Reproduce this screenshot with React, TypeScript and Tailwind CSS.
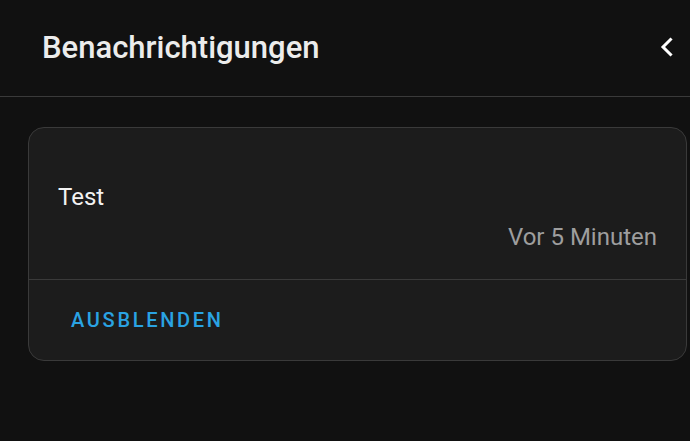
import React from 'react';

export default function App() {
  return (
    <div className="h-[441px] w-[690px] overflow-hidden bg-[#111111] font-['Roboto',sans-serif]">
      <header className="flex h-[97px] items-center justify-between border-b border-[#3a3a3a] pl-[42px] pr-[17px]">
        <h1 className="text-[31px] leading-[36px] font-medium text-[#ececec]">Benachrichtigungen</h1>
        <svg width="14" height="20" viewBox="0 0 14 20" fill="none" className="-mt-[2px]">
          <path d="M11.5 2.5 4 10l7.5 7.5" stroke="#ffffff" strokeWidth="3" strokeLinecap="square" />
        </svg>
      </header>
      <div className="pl-[28px] pr-[3px] pt-[30px]">
        <div className="rounded-[16px] border border-[#3a3a3a] bg-[#1c1c1c]">
          <div className="h-[151px] px-[29px] pt-[54px]">
            <p className="text-[24px] leading-[30px] text-[#f2f2f2]">Test</p>
            <p className="mt-[10px] text-right text-[24px] leading-[30px] text-[#9e9e9e]">Vor 5 Minuten</p>
          </div>
          <div className="flex h-[81px] items-center border-t border-[#3a3a3a] pl-[42px]">
            <button className="text-[20px] leading-[24px] font-medium tracking-[2.7px] text-[#2aa3e3]">AUSBLENDEN</button>
          </div>
        </div>
      </div>
    </div>
  );
}
